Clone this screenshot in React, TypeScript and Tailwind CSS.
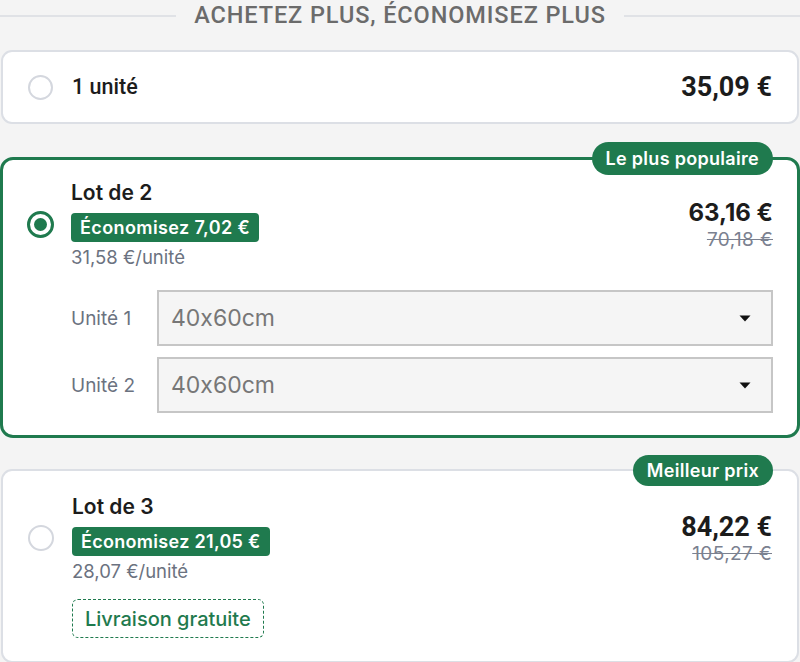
import React from "react";

const GREEN = "#1f7a4e";

function Caret() {
  return (
    <svg width="12" height="7" viewBox="0 0 12 7" className="shrink-0">
      <path d="M0.5 0.5 L11.5 0.5 L6 6.5 Z" fill="#111" />
    </svg>
  );
}

function Select({ label }: { label: string }) {
  return (
    <div className="flex items-center">
      <div className="w-[86px] text-[19px] text-[#6b7280] leading-none">{label}</div>
      <div className="flex-1 h-[56px] bg-[#f5f5f5] border-2 border-[#c6c6c6] flex items-center justify-between pl-[12px] pr-[20px]">
        <span className="text-[23px] text-[#777] leading-none">40x60cm</span>
        <Caret />
      </div>
    </div>
  );
}

export default function App() {
  return (
    <div
      className="w-[800px] h-[662px] bg-[#f4f4f4] overflow-hidden"
      style={{ fontFamily: "Inter, 'Noto Sans', sans-serif", fontFeatureSettings: "'calt' 0" }}
    >
      {/* header */}
      <div className="h-[32px] flex items-center gap-[18px]">
        <div className="flex-1 h-[2px] bg-[#e0e2e6]" />
        <div
          className="text-[23.5px] font-medium text-[#6b6b6b] leading-none tracking-[0.9px]"
          style={{ fontFamily: "Roboto, sans-serif" }}
        >
          ACHETEZ PLUS, ÉCONOMISEZ PLUS
        </div>
        <div className="flex-1 h-[2px] bg-[#e0e2e6]" />
      </div>

      {/* card 1 */}
      <div className="mt-[18px] mx-[1px] h-[74px] bg-white border-2 border-[#dcdfe5] rounded-[11px] flex items-center pl-[25px] pr-[25px]">
        <div className="w-[25px] h-[25px] rounded-full border-2 border-[#d4d7de] bg-white" />
        <div
          className="ml-[19px] text-[21.5px] font-medium text-[#1c1c1c]"
          style={{ fontFamily: "Roboto, sans-serif" }}
        >
          1 unité
        </div>
        <div
          className="ml-auto text-[27px] font-bold text-[#1c1c1c]"
          style={{ fontFamily: "Roboto, sans-serif" }}
        >
          35,09 €
        </div>
      </div>

      {/* card 2 */}
      <div
        className="relative mt-[33px] h-[281px] bg-white border-[3px] rounded-[13px] pl-[24px] pr-[24px] pt-[19px]"
        style={{ borderColor: GREEN }}
      >
        <div
          className="absolute right-[24px] top-[-18px] h-[33px] px-[14px] rounded-full flex items-center text-white text-[18px] font-semibold tracking-[0.3px]"
          style={{ backgroundColor: GREEN }}
        >
          Le plus populaire
        </div>
        <div className="flex items-center">
          <div
            className="w-[27px] h-[27px] rounded-full border-[3px] flex items-center justify-center"
            style={{ borderColor: GREEN }}
          >
            <div className="w-[13px] h-[13px] rounded-full" style={{ backgroundColor: GREEN }} />
          </div>
          <div className="ml-[17px] flex flex-col items-start">
            <div className="h-[28px] flex items-center text-[21px] font-semibold text-[#1c1c1c]">Lot de 2</div>
            <div
              className="mt-[6px] h-[29px] px-[9px] rounded-[4px] flex items-center text-white text-[18px] font-semibold tracking-[0.4px]"
              style={{ backgroundColor: GREEN }}
            >
              Économisez 7,02 €
            </div>
            <div className="mt-[5px] h-[22px] flex items-center text-[18.5px] text-[#6b7280]">31,58 €/unité</div>
          </div>
          <div className="ml-auto flex flex-col items-end">
            <div className="text-[24px] font-bold text-[#1c1c1c] leading-[30px]">63,16 €</div>
            <div className="text-[19px] text-[#7b8190] line-through leading-[22px] mt-[1px] tracking-[0.4px]">70,18 €</div>
          </div>
        </div>
        <div className="mt-[21px] ml-[44px] flex flex-col gap-[11px]">
          <Select label="Unité 1" />
          <Select label="Unité 2" />
        </div>
      </div>

      {/* card 3 */}
      <div className="relative mt-[31px] mx-[1px] h-[194px] bg-white border-2 border-[#dcdfe5] rounded-[11px] pl-[25px] pr-[25px] pt-[22px]">
        <div
          className="absolute right-[24px] top-[-16px] h-[31px] px-[14px] rounded-full flex items-center text-white text-[18px] font-semibold tracking-[0.3px]"
          style={{ backgroundColor: GREEN }}
        >
          Meilleur prix
        </div>
        <div className="flex items-center">
          <div className="w-[26px] h-[26px] rounded-full border-2 border-[#d4d7de] bg-white" />
          <div className="ml-[18px] flex flex-col items-start">
            <div className="h-[28px] flex items-center text-[21px] font-semibold text-[#1c1c1c]">Lot de 3</div>
            <div
              className="mt-[6px] h-[29px] px-[9px] rounded-[4px] flex items-center text-white text-[18px] font-semibold tracking-[0.3px]"
              style={{ backgroundColor: GREEN }}
            >
              Économisez 21,05 €
            </div>
            <div className="mt-[5px] h-[22px] flex items-center text-[18.5px] text-[#6b7280]">28,07 €/unité</div>
          </div>
          <div className="ml-auto flex flex-col items-end">
            <div
              className="text-[27px] font-bold text-[#1c1c1c] leading-[30px]"
              style={{ fontFamily: "Roboto, sans-serif" }}
            >
              84,22 €
            </div>
            <div className="text-[19px] text-[#7b8190] line-through leading-[22px] mt-[1px] tracking-[0.4px]">105,27 €</div>
          </div>
        </div>
        <div className="mt-[16px] ml-[44px]">
          <div
            className="inline-flex items-center h-[39px] px-[12px] rounded-[6px] border-[1.5px] border-dashed text-[20px] font-medium"
            style={{ borderColor: GREEN, color: GREEN }}
          >
            Livraison gratuite
          </div>
        </div>
      </div>
    </div>
  );
}
